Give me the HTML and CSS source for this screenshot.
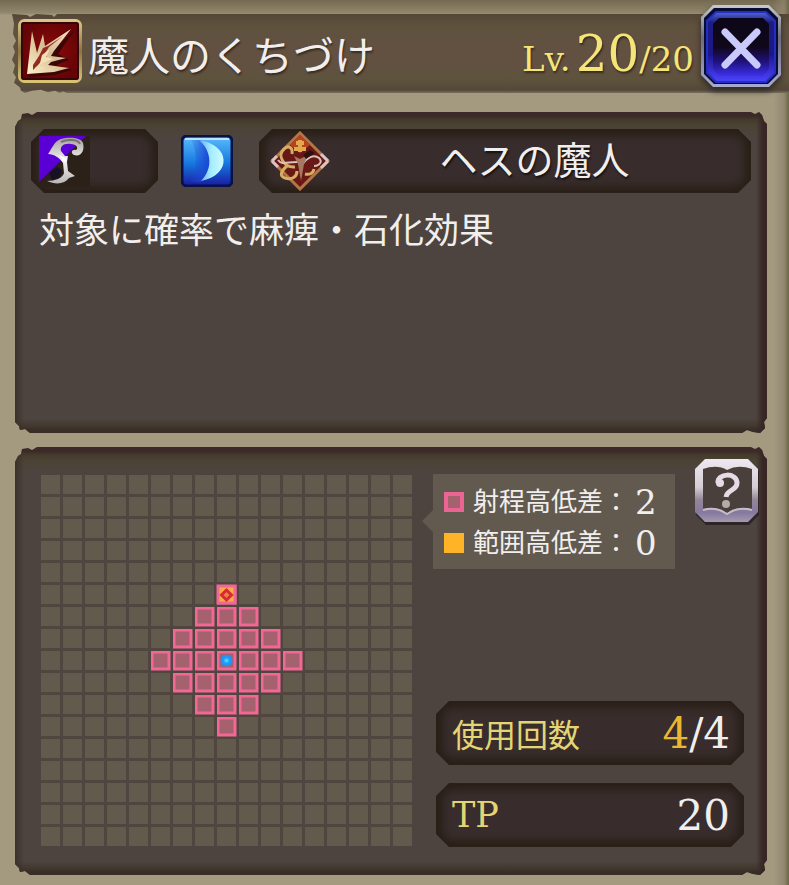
FILE: index.html
```html
<!DOCTYPE html>
<html lang="ja">
<head>
<meta charset="utf-8">
<meta name="viewport" content="width=device-width, initial-scale=1">
<title>魔人のくちづけ</title>
<link rel="stylesheet" href="styles.css">
</head>
<body>
<main class="screen">
  <header class="title-bar">
    <svg class="skill-icon" viewBox="0 0 64 64" aria-hidden="true">
      <defs>
        <radialGradient id="red"><stop offset="0.4" stop-color="#7d0809"/><stop offset="1" stop-color="#650406"/></radialGradient>
        <linearGradient id="gold" x1="0" y1="0" x2="0" y2="1"><stop offset="0" stop-color="#dcc588"/><stop offset="0.5" stop-color="#8d7541"/><stop offset="1" stop-color="#d9c273"/></linearGradient>
        <linearGradient id="flash" x1="1" y1="0" x2="0" y2="1"><stop offset="0" stop-color="#f5e6d0"/><stop offset="0.5" stop-color="#d8bd93"/><stop offset="1" stop-color="#fff3cf"/></linearGradient>
      </defs>
      <rect x="1.500" y="1.500" width="61" height="61" rx="5" fill="url(#red)" stroke="url(#gold)" stroke-width="3"/>
      <rect x="4" y="4" width="56" height="56" rx="2" fill="none" stroke="#35070a" stroke-width="2"/>
      <path d="M11 58 16 39 28 36 56 12 40 35 51 41 38 46 54 51 36 56Z" fill="#3c0506"/>
      <path d="M9 55 14 12 19 34 25 15 27 27 53 10 36 32 33 37 48 39 33 43 30 46 51 49 36 53Z" fill="url(#flash)"/>
      <path d="M15 46 21 37 25 29 30 27 45 17 31 28 26 36 29 37 21 45 15 51Z" fill="#922c22"/>
      <path d="M24 36 32 30 28 38 35 40 24 44 17 49 27 48 16 53 22 44Z" fill="#f3e0b5"/>
    </svg>
    <h1 class="title">魔人のくちづけ</h1>
    <p class="level"><span class="level-label">Lv.</span><strong class="level-now">20</strong><span class="level-max">/20</span></p>
    <button class="close" type="button" aria-label="閉じる">
      <svg viewBox="0 0 84 84" aria-hidden="true">
        <defs>
          <linearGradient id="rim" x1="0" y1="0" x2="0" y2="1"><stop offset="0" stop-color="#c8c9cc"/><stop offset="0.4" stop-color="#6b6c7c"/><stop offset="1" stop-color="#a8abd0"/></linearGradient>
          <linearGradient id="blue" x1="0" y1="0" x2="0" y2="1"><stop offset="0" stop-color="#5266d6"/><stop offset="0.15" stop-color="#1c1e80"/><stop offset="0.6" stop-color="#1c168b"/><stop offset="1" stop-color="#4b42ff"/></linearGradient>
          <linearGradient id="well" x1="0" y1="0" x2="0" y2="1"><stop offset="0" stop-color="#0c0718"/><stop offset="0.5" stop-color="#10071b"/><stop offset="0.75" stop-color="#20117b"/><stop offset="1" stop-color="#3d30ec"/></linearGradient>
        </defs>
        <path d="M14 1H70L82 13V71L70 83H14L2 71V13Z" fill="url(#rim)"/>
        <path d="M15 4H69L79 14V70L69 80H15L5 70V14Z" fill="#080b35"/>
        <path d="M17 8H67L76 17V69L67 78H17L8 69V17Z" fill="url(#blue)" stroke="#2430bd" stroke-width="2"/>
        <path d="M20 14H64L70 20V65L64 72H20L14 65V20Z" fill="url(#well)"/>
        <path d="M26 28 58 61M58 28 26 61" stroke="#c9c9fa" stroke-width="7" stroke-linecap="round"/>
      </svg>
    </button>
  </header>

  <section class="panel summary">
    <div class="tags">
      <div class="plate weapon">
        <svg class="weapon-icon" viewBox="0 0 51 51" role="img" aria-label="武器">
          <defs><linearGradient id="steel" x1="0" y1="0" x2="0" y2="1"><stop offset="0" stop-color="#a5a19f"/><stop offset="0.5" stop-color="#f4f1f2"/><stop offset="1" stop-color="#b9b6b5"/></linearGradient></defs>
          <path fill="#2b2118" d="M0 0h51v51H0z"/>
          <path fill="#5b00d5" d="M0 0h47L0 46z"/>
          <path d="M10 37 18 31 23 34 21 41 13 44z" fill="#171127"/>
          <path d="M9 18C13 13 15 5 22 3 29 1 42 1 44 7 46 15 42 21 35 19 31 17 33 13 37 14 40 12 37 8 32 8 24 7 21 11 22 15L26 20 29 20 28 26 29 35 36 40 30 42C26 48 17 49 8 45 16 45 24 42 25 37L24 27C21 22 15 18 9 18Z" fill="url(#steel)"/>
          <path d="M22 6C28 3 39 3 41 8" fill="none" stroke="#777170" stroke-width="2"/>
          <path d="m20 19 6 3 2-1-2 6z" fill="#fff"/>
        </svg>
      </div>
      <svg class="moon-icon" viewBox="0 0 52 52" role="img" aria-label="月">
        <defs>
          <linearGradient id="sky" x1="0" y1="0" x2="0" y2="1"><stop offset="0" stop-color="#5cbcff"/><stop offset="0.55" stop-color="#1678dd"/><stop offset="1" stop-color="#1919a3"/></linearGradient>
          <linearGradient id="shade" x1="0" y1="0" x2="1" y2="0"><stop offset="0" stop-color="#1d4fd6" stop-opacity="0"/><stop offset="1" stop-color="#1b45d4"/></linearGradient>
          <linearGradient id="moon" x1="0" y1="0" x2="1" y2="0"><stop offset="0" stop-color="#6aa8f5"/><stop offset="0.5" stop-color="#a5edff"/><stop offset="1" stop-color="#cffbff"/></linearGradient>
        </defs>
        <rect x="1" y="1" width="50" height="50" rx="5" fill="url(#sky)" stroke="#07124a" stroke-width="3"/>
        <path d="M4 4H48" stroke="#b9e5ff" stroke-width="2"/>
        <path d="M10 5H20C32 16 32 35 20 47H8C16 34 17 18 10 5Z" fill="url(#shade)"/>
        <path d="M18 5C50 10 51 40 20 46 32 34 31 16 18 5Z" fill="url(#moon)"/>
      </svg>
      <div class="plate owner">
        <svg class="crest-icon" viewBox="0 0 60 60" aria-hidden="true">
          <path d="M30 2 58 30 30 58 2 30Z" fill="#681815" stroke="#b57647" stroke-width="3"/>
          <path d="M30 4 40 14 30 22 20 14Z" fill="#b6431e"/>
          <path d="M2 30 7 25M2 30l6 6M58 30l-7-7M58 30l-7 7" stroke="#d9c3c6" stroke-width="3"/>
          <path d="M30 9v12M26 12h8M24 18h12" stroke="#e1a94c" stroke-width="4"/>
          <path d="M22 23c1-7-4-9-8-5-8 7 1 19 11 18M17 35c-6 5-8 10-2 12 7 2 12-1 12-7M35 43c4 1 8 0 9-5" fill="none" stroke="#d6ad65" stroke-width="3"/>
          <path d="M29 31C19 30 12 35 8 29M32 34c5-8 12-11 17-7 4 4 0 8-5 8" fill="none" stroke="#d8c3ba" stroke-width="2"/>
          <path d="m24 25 6 3 8-4-4 9-3 17-3-17z" fill="#a87762"/>
          <path d="m33 24 7-5 5 3-9 6z" fill="#2c1310"/>
        </svg>
        <span class="owner-name">ヘスの魔人</span>
      </div>
    </div>
    <p class="description">対象に確率で麻痺・石化効果</p>
  </section>

  <section class="panel range">
    <svg class="board" viewBox="0 0 372 372" role="img" aria-label="射程と範囲">
      <defs>
        <pattern id="tile" width="22" height="22" patternUnits="userSpaceOnUse"><rect width="19" height="19" fill="#635a4e"/></pattern>
        <pattern id="reach" width="22" height="22" patternUnits="userSpaceOnUse"><rect x="1" y="1" width="17" height="17" fill="#a5616e" stroke="#f26796" stroke-width="3"/></pattern>
        <radialGradient id="self"><stop offset="0" stop-color="#67dfff"/><stop offset="0.5" stop-color="#1b9eff"/><stop offset="1" stop-color="#2b8ce5"/></radialGradient>
      </defs>
      <path d="M0 0h371v371H0z" fill="#50463f"/>
      <path d="M0 0h371v371H0z" fill="url(#tile)"/>
      <path d="M176 110h22v22h22v22h22v22h22v22h-22v22h-22v22h-22v22h-22v-22h-22v-22h-22v-22h-22v-22h22v-22h22v-22h22z" fill="url(#reach)"/>
      <rect x="177" y="111" width="17" height="17" fill="#f6ad49" stroke="#f26796" stroke-width="3"/>
      <path d="m185.500 115 5 5-5 5-5-5z" fill="#f47c52" stroke="#d72c2d" stroke-width="3"/>
      <circle cx="185.500" cy="185.500" r="6" fill="url(#self)"/>
    </svg>
    <div class="details">
      <div class="details-top">
        <dl class="legend">
          <div class="legend-row"><dt class="key key-reach">射程高低差：</dt><dd>2</dd></div>
          <div class="legend-row"><dt class="key key-area">範囲高低差：</dt><dd>0</dd></div>
        </dl>
        <button class="help" type="button" aria-label="ヘルプ">
          <svg viewBox="0 0 64 66" aria-hidden="true">
            <defs><linearGradient id="silver" x1="0" y1="0" x2="0" y2="1"><stop offset="0" stop-color="#eee9f0"/><stop offset="0.45" stop-color="#d4cdd3"/><stop offset="0.65" stop-color="#938597"/><stop offset="0.85" stop-color="#85799f"/><stop offset="1" stop-color="#a39aaf"/></linearGradient></defs>
            <path d="M11 2H54L64 12V56L54 66H11L1 56V12Z" fill="#2c2524"/>
            <path d="M10 0H53L63 10V53L53 63H10L0 53V10Z" fill="url(#silver)"/>
            <path d="M8 10Q22 5 32 11Q43 5 57 10V50Q43 47 32 55Q20 47 8 50Z" fill="#493f3b"/>
            <path d="M8 51Q21 47 32 55Q43 47 57 51" fill="none" stroke="#c8bdca" stroke-width="2"/>
            <path d="M23 24C22 14 42 13 42 24C42 32 32 30 31 38" fill="none" stroke="#e6dae4" stroke-width="5"/>
            <circle cx="25" cy="24" r="4" fill="#e6dae4"/>
            <circle cx="31" cy="45" r="4" fill="#b7a9a8"/>
          </svg>
        </button>
      </div>
      <dl class="stats">
        <div class="plate stat"><dt>使用回数</dt><dd><span class="remaining">4</span>/4</dd></div>
        <div class="plate stat"><dt class="latin">TP</dt><dd>20</dd></div>
      </dl>
    </div>
  </section>
</main>
</body>
</html>
```
FILE: styles.css
```css
* {
  box-sizing: border-box;
}

body,
h1,
p,
dl,
dd {
  margin: 0;
}

body {
  background: #a39a80;
  color: #f1eeee;
  font-family: "DejaVu Serif", "Noto Sans CJK JP", serif;
}

button {
  padding: 0;
  border: 0;
  background: none;
  cursor: pointer;
}

svg {
  display: block;
}

.screen {
  min-height: 100vh;
  padding: 14px 22px 10px 15px;
  background:
    linear-gradient(to left, #6a6748, rgba(142, 132, 108, 0.8) 5px, rgba(163, 154, 128, 0) 16px),
    linear-gradient(#746a51, #91876d 13px, #a39a80 15px);
}

/* Title bar */

.title-bar {
  position: relative;
  display: flex;
  align-items: center;
  height: 79px;
  margin: 0 -22px 19px -3px;
  padding: 6px 95px 0 6px;
  text-shadow: 1px 2px 2px #382c23;
}

.title-bar::before {
  content: "";
  position: absolute;
  inset: 0;
  background: linear-gradient(#554535, #5e523e 12px, #625141 30px, #625141 52px, #5d533c 66px, #55473a 76px, #77705e);
  clip-path: polygon(0 0, 15px 1px, 18px 3px, 24px 0, 40px 1px, 42px 3px, 45px 0, 100% 0, 100% 100%, 55px 100%, 51px 98%, 48px 100%, 43px 97%, 36px 99%, 29px 96%, 20px 97%, 13px 100%, 9px 97%, 8px 93%, 2px 87%, 4px 80%, 1px 74%, 3px 65%, 0 58%, 3px 48%, 1px 41%, 4px 34%, 1px 25%, 2px 12%);
}

.skill-icon {
  position: relative;
  flex: none;
  width: 64px;
  height: 64px;
  margin-bottom: 12px;
}

.title {
  position: relative;
  flex: 1;
  margin-left: 6px;
  font-size: 41px;
  font-weight: 400;
  line-height: 60px;
  white-space: nowrap;
}

.level {
  position: relative;
  padding-top: 6px;
  color: #f5e578;
  line-height: 60px;
  white-space: nowrap;
}

.level-label {
  margin-right: 5px;
  font-size: 34px;
}

.level-now {
  font-size: 50px;
  font-weight: 400;
}

.level-max {
  font-size: 34px;
}

.close {
  position: absolute;
  top: -10px;
  right: 6px;
  width: 84px;
  height: 84px;
  filter: drop-shadow(0 4px 3px #302a24);
}

/* Panels */

.panel {
  background:
    linear-gradient(to right, #3c302a, rgba(60, 48, 42, 0) 9px),
    linear-gradient(to left, #382625 4px, rgba(60, 48, 42, 0) 11px),
    linear-gradient(to top, #382d27 3px, #40362c 6px, rgba(75, 66, 58, 0) 14px),
    linear-gradient(#3b2a28 4px, #453b2c 8px, #4b4335 14px, #4d443f 24px);
  clip-path: polygon(0 15px, 3px 9px, 6px 7px, 7px 2px, 13px 1px, 17px 3px, 22px 0, calc(100% - 16px) 0, calc(100% - 12px) 2px, calc(100% - 8px) 0, calc(100% - 5px) 3px, calc(100% - 3px) 9px, 100% 12px, 100% calc(100% - 15px), calc(100% - 3px) calc(100% - 11px), calc(100% - 2px) calc(100% - 5px), calc(100% - 7px) 100%, calc(100% - 14px) calc(100% - 1px), calc(100% - 20px) calc(100% - 3px), calc(100% - 25px) 100%, 15px 100%, 10px calc(100% - 4px), 5px calc(100% - 3px), 4px calc(100% - 7px), 0 calc(100% - 11px));
}

.plate {
  position: relative;
  display: flex;
  align-items: center;
  height: 64px;
  background: #291f17;
  clip-path: polygon(13px 0, calc(100% - 13px) 0, 100% 13px, 100% calc(100% - 13px), calc(100% - 13px) 100%, 13px 100%, 0 calc(100% - 13px), 0 13px);
}

.plate::before {
  content: "";
  position: absolute;
  inset: 7px;
  border-radius: 10px;
  background: #382d2c;
  filter: blur(4px);
}

.plate > * {
  position: relative;
}

/* Summary */

.summary {
  min-height: 321px;
  margin-bottom: 14px;
  padding: 17px 16px 20px;
}

.tags {
  display: flex;
  align-items: center;
}

.weapon {
  flex: none;
  width: 127px;
  padding-left: 8px;
}

.weapon-icon {
  width: 51px;
  height: 51px;
}

.moon-icon {
  flex: none;
  width: 52px;
  height: 52px;
  margin: 0 26px 0 23px;
}

.owner {
  flex: 1;
  padding-left: 11px;
}

.crest-icon {
  flex: none;
  width: 60px;
  height: 60px;
}

.owner-name {
  flex: 1;
  padding-right: 12px;
  font-size: 38px;
  line-height: 60px;
  text-align: center;
  text-shadow: 1px 2px 2px #171111;
}

.description {
  padding: 12px 8px 0;
  font-size: 35px;
  line-height: 52px;
}

/* Range */

.range {
  display: grid;
  grid-template-columns: minmax(0, 372fr) minmax(0, 326fr);
  gap: 20px;
  padding: 12px 8px 28px 26px;
}

.board {
  width: 100%;
  margin-top: 16px;
}

.details {
  display: flex;
  flex-direction: column;
  justify-content: space-between;
}

.details-top {
  display: flex;
  align-items: flex-start;
  justify-content: space-between;
}

.legend {
  position: relative;
  width: 242px;
  margin-top: 15px;
  padding: 7px 11px 6px;
  background: #635a4f;
}

.legend::before {
  content: "";
  position: absolute;
  top: 36px;
  left: -11px;
  width: 11px;
  height: 22px;
  background: #635a4f;
  clip-path: polygon(100% 0, 100% 100%, 0 50%);
}

.legend-row {
  display: flex;
  align-items: center;
  height: 41px;
}

.key {
  display: flex;
  align-items: center;
  gap: 9px;
  font-size: 26px;
  line-height: 40px;
  white-space: nowrap;
}

.key::before {
  content: "";
  box-sizing: border-box;
  width: 20px;
  height: 20px;
}

.key-reach::before {
  border: 4px solid #ec6494;
  background: #a5616e;
}

.key-area::before {
  background: #ffb326;
}

.legend dd {
  margin-left: 6px;
  font-size: 34px;
  line-height: 40px;
}

.help {
  width: 64px;
  height: 66px;
}

.stats {
  display: grid;
  gap: 18px;
  margin: 0 15px 0 3px;
}

.stat {
  justify-content: space-between;
  padding: 0 14px 0 16px;
}

.stat dt {
  color: #e4d574;
  font-size: 32px;
}

.stat .latin {
  font-size: 35px;
}

.stat dd {
  font-size: 42px;
}

.remaining {
  color: #edb632;
}
```
